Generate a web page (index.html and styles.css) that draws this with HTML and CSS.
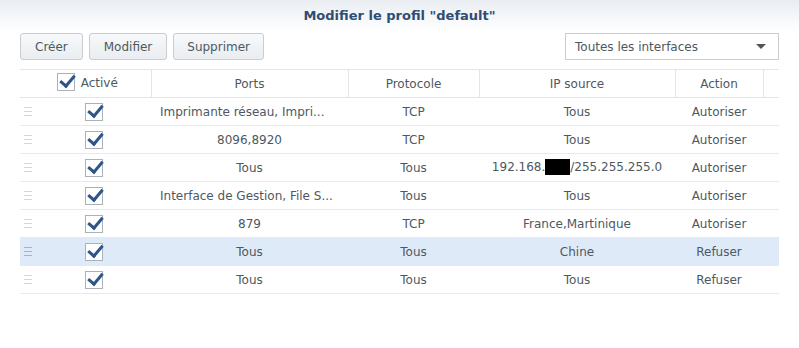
FILE: index.html
```html
<!DOCTYPE html>
<html lang="fr">
<head>
    <meta charset="UTF-8">
    <title>Modifier le profil "default"</title>
    <link rel="stylesheet" href="styles.css">
</head>
<body>
    <div class="titleBar">Modifier le profil "default"</div>

    <div class="toolbar">
        <div class="buttons">
            <button class="btn">Créer</button>
            <button class="btn">Modifier</button>
            <button class="btn">Supprimer</button>
        </div>
        <div class="select">
            <span>Toutes les interfaces</span>
            <span class="arrow"></span>
        </div>
    </div>

    <table class="grid">
        <colgroup>
            <col class="cGrip">
            <col class="cCheck">
            <col class="cPorts">
            <col class="cProto">
            <col class="cIp">
            <col class="cAction">
            <col class="cEnd">
        </colgroup>
        <thead>
            <tr>
                <th colspan="2" class="headCheck"><span class="check"></span>Activé</th>
                <th>Ports</th>
                <th>Protocole</th>
                <th>IP source</th>
                <th>Action</th>
                <th class="last"></th>
            </tr>
        </thead>
        <tbody>
            <tr>
                <td class="grip"><span></span></td>
                <td class="left"><span class="check"></span></td>
                <td class="clip">Imprimante réseau, Impri...</td>
                <td>TCP</td>
                <td>Tous</td>
                <td>Autoriser</td>
                <td></td>
            </tr>
            <tr>
                <td class="grip"><span></span></td>
                <td class="left"><span class="check"></span></td>
                <td>8096,8920</td>
                <td>TCP</td>
                <td>Tous</td>
                <td>Autoriser</td>
                <td></td>
            </tr>
            <tr>
                <td class="grip"><span></span></td>
                <td class="left"><span class="check"></span></td>
                <td>Tous</td>
                <td>Tous</td>
                <td>192.168.<span class="masked"></span>/255.255.255.0</td>
                <td>Autoriser</td>
                <td></td>
            </tr>
            <tr>
                <td class="grip"><span></span></td>
                <td class="left"><span class="check"></span></td>
                <td class="clip">Interface de Gestion, File S...</td>
                <td>Tous</td>
                <td>Tous</td>
                <td>Autoriser</td>
                <td></td>
            </tr>
            <tr>
                <td class="grip"><span></span></td>
                <td class="left"><span class="check"></span></td>
                <td>879</td>
                <td>TCP</td>
                <td>France,Martinique</td>
                <td>Autoriser</td>
                <td></td>
            </tr>
            <tr class="selected">
                <td class="grip"><span></span></td>
                <td class="left"><span class="check"></span></td>
                <td>Tous</td>
                <td>Tous</td>
                <td>Chine</td>
                <td>Refuser</td>
                <td></td>
            </tr>
            <tr>
                <td class="grip"><span></span></td>
                <td class="left"><span class="check"></span></td>
                <td>Tous</td>
                <td>Tous</td>
                <td>Tous</td>
                <td>Refuser</td>
                <td></td>
            </tr>
        </tbody>
    </table>
</body>
</html>
```

FILE: styles.css
```css
body {
    margin: 0;
    font-family: "DejaVu Sans", Verdana, sans-serif;
    font-size: 12px;
    color: #4e5862;
    background-color: #fff;
}
.titleBar {
    height: 31px;
    line-height: 31px;
    text-align: center;
    font-weight: bold;
    font-size: 13px;
    color: #2f4d73;
    background: linear-gradient(#e9edf2, #fff);
}
.toolbar {
    display: flex;
    justify-content: space-between;
    padding: 2px 20px 0 20px;
    height: 27px;
}
.buttons {
    display: flex;
    gap: 6px;
}
.btn {
    height: 27px;
    padding: 0 14px;
    font-family: inherit;
    font-size: 12px;
    color: #4e5862;
    border: 1px solid #c7cdd3;
    border-radius: 3px;
    background: linear-gradient(#f7f9fa, #e9edf1);
}
.btn:last-child {
    padding: 0 13px;
}
.select {
    box-sizing: border-box;
    width: 214px;
    height: 27px;
    border: 1px solid #c9cdd1;
    display: flex;
    align-items: center;
    justify-content: space-between;
    padding: 0 12px 0 9px;
}
.arrow {
    width: 0;
    height: 0;
    border-left: 5px solid transparent;
    border-right: 5px solid transparent;
    border-top: 5px solid #555;
}
.grid {
    margin: 9px 0 0 20px;
    width: 759px;
    border-collapse: collapse;
    table-layout: fixed;
}
.cGrip { width: 55px; }
.cCheck { width: 76px; }
.cPorts { width: 197px; }
.cProto { width: 131px; }
.cIp { width: 196px; }
.cAction { width: 88px; }
.cEnd { width: 16px; }
.grid th {
    height: 27px;
    font-weight: normal;
    border-top: 1px solid #e3e5e8;
    border-bottom: 1px solid #e3e5e8;
    border-left: 1px solid #e3e5e8;
    padding: 0;
}
.grid th:first-child {
    border-left: none;
}
.grid th.last {
    border-left: 1px solid #e3e5e8;
}
.headCheck {
    padding-left: 4px !important;
}
.headCheck .check {
    vertical-align: middle;
    margin: -3px 6px 0 0;
}
.grid td {
    height: 27px;
    text-align: center;
    border-bottom: 1px solid #e8e9eb;
    padding: 0;
    white-space: nowrap;
}
.grid td.left {
    text-align: left;
}
.grid td.clip {
    text-align: left;
    padding-left: 9px;
    overflow: hidden;
}
.grid td.left .check {
    margin: 3px 0 0 10px;
}
.selected td {
    background-color: #dfeaf8;
}
.check {
    display: inline-block;
    box-sizing: border-box;
    width: 18px;
    height: 18px;
    border: 1px solid #a9b1ba;
    background-color: #fff;
    position: relative;
}
.check::after {
    content: "";
    position: absolute;
    left: 5px;
    top: -2px;
    width: 6px;
    height: 12px;
    border-right: 3px solid #2e5588;
    border-bottom: 3px solid #2e5588;
    transform: rotate(40deg);
}
.grid td.grip {
    text-align: left;
}
.grip span {
    display: block;
    margin-left: 4px;
    width: 8px;
    height: 7px;
    border-top: 1px solid #d3d7db;
    border-bottom: 1px solid #d3d7db;
    position: relative;
}
.grip span::after {
    content: "";
    position: absolute;
    left: 0;
    right: 0;
    top: 3px;
    border-top: 1px solid #d3d7db;
}
.selected .grip span,
.selected .grip span::after {
    border-color: #a8b3c0;
}
.masked {
    display: inline-block;
    width: 25px;
    height: 16px;
    background-color: #000;
    vertical-align: middle;
    margin-top: -2px;
}
```
